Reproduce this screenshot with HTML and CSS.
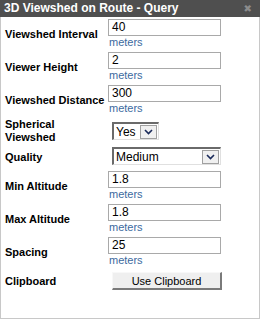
FILE: index.html
```html
<!DOCTYPE html>
<html>
<head>
  <title>3D Viewshed on Route - Query</title>
  <meta charset="UTF-8">
  <link rel="stylesheet" href="styles.css">
</head>
<body>
  <div class="window">
    <div class="titlebar">
      <span class="title">3D Viewshed on Route - Query</span>
      <span class="close">&#x2716;</span>
    </div>
    <div class="form">
      <div class="label">Viewshed Interval</div>
      <div class="field">
        <div class="textbox">40</div>
        <div class="unit">meters</div>
      </div>

      <div class="label">Viewer Height</div>
      <div class="field">
        <div class="textbox">2</div>
        <div class="unit">meters</div>
      </div>

      <div class="label">Viewshed Distance</div>
      <div class="field">
        <div class="textbox">300</div>
        <div class="unit">meters</div>
      </div>

      <div class="label">Spherical<br>Viewshed</div>
      <div class="field">
        <div class="select small">
          <span class="value">Yes</span>
          <span class="arrow"><svg width="9" height="6" viewBox="0 0 9 6"><path d="M1 1 L4.5 4.5 L8 1" fill="none" stroke="#1a2a5a" stroke-width="1.6"/></svg></span>
        </div>
      </div>

      <div class="label">Quality</div>
      <div class="field quality">
        <div class="select wide">
          <span class="value">Medium</span>
          <span class="arrow"><svg width="9" height="6" viewBox="0 0 9 6"><path d="M1 1 L4.5 4.5 L8 1" fill="none" stroke="#1a2a5a" stroke-width="1.6"/></svg></span>
        </div>
      </div>

      <div class="label">Min Altitude</div>
      <div class="field">
        <div class="textbox">1.8</div>
        <div class="unit">meters</div>
      </div>

      <div class="label">Max Altitude</div>
      <div class="field">
        <div class="textbox">1.8</div>
        <div class="unit">meters</div>
      </div>

      <div class="label">Spacing</div>
      <div class="field">
        <div class="textbox">25</div>
        <div class="unit">meters</div>
      </div>

      <div class="label clip">Clipboard</div>
      <div class="field clip">
        <button class="btn">Use Clipboard</button>
      </div>
    </div>
  </div>
</body>
</html>
```

FILE: styles.css
```css
body {
  margin: 0;
  font-family: Arial, "Liberation Sans", sans-serif;
  background-color: #fff;
}
.window {
  width: 260px;
  height: 319px;
  box-sizing: border-box;
  border: 1px solid #c8c8c8;
  border-top: none;
  background-color: #fff;
}
.titlebar {
  height: 17px;
  margin: 0 -1px;
  background-color: #4f4f4f;
  color: #fff;
  display: flex;
  align-items: center;
  justify-content: space-between;
  padding: 0 8px 0 4px;
}
.title {
  font-size: 12px;
  font-weight: bold;
  line-height: 17px;
}
.close {
  color: #8c8c8c;
  font-size: 10px;
  font-family: "DejaVu Sans", sans-serif;
}
.form {
  display: grid;
  grid-template-columns: 103px 1fr;
  row-gap: 3px;
  padding: 2px 0 0 4px;
}
.label {
  font-size: 11px;
  font-weight: bold;
  color: #000;
  line-height: 13px;
  display: flex;
  align-items: center;
}
.field {
  display: flex;
  flex-direction: column;
  align-items: flex-start;
  justify-content: center;
}
.field.quality {
  min-height: 21px;
  justify-content: flex-start;
}
.textbox {
  width: 113px;
  height: 17px;
  box-sizing: border-box;
  border: 1px solid #a9a9a9;
  font-size: 12px;
  line-height: 15px;
  padding-left: 3px;
  color: #000;
}
.unit {
  font-size: 11px;
  color: #3c6aa0;
  line-height: 13px;
  padding-left: 1px;
}
.select {
  height: 18px;
  box-sizing: border-box;
  border-top: 2px solid #6a6a6a;
  border-left: 2px solid #6a6a6a;
  border-right: 1px solid #e0e0e0;
  border-bottom: 1px solid #e0e0e0;
  margin-left: 4px;
  display: flex;
  align-items: center;
  justify-content: space-between;
  font-size: 12px;
  background-color: #fff;
}
.select.small {
  width: 47px;
}
.select.wide {
  width: 109px;
}
.select .value {
  padding-left: 2px;
}
.arrow {
  width: 17px;
  height: 14px;
  box-sizing: border-box;
  background-color: #f0f0f0;
  border: 1px solid #a0a0a0;
  display: flex;
  align-items: center;
  justify-content: center;
  margin-right: 1px;
}
.clip {
  margin-top: 2px;
}
.btn {
  width: 110px;
  height: 18px;
  margin-left: 4px;
  padding: 0;
  font-family: Arial, "Liberation Sans", sans-serif;
  font-size: 11px;
  color: #000;
  background-color: #efefef;
  border-top: 1px solid #f8f8f8;
  border-left: 1px solid #f8f8f8;
  border-right: 2px solid #7a7a7a;
  border-bottom: 2px solid #7a7a7a;
}
```
